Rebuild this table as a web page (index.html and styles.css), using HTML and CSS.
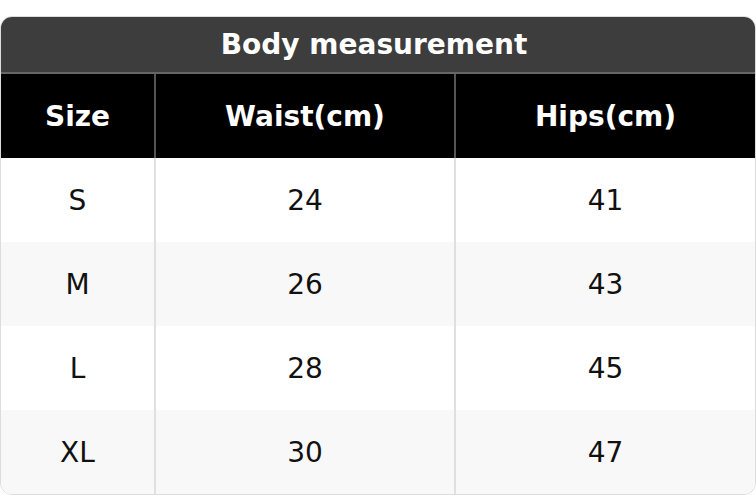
FILE: index.html
```html
<!DOCTYPE html>
<html>
<head>
<meta charset="utf-8">
<link rel="stylesheet" href="styles.css">
</head>
<body>
<div class="card">
  <div class="title">Body measurement</div>
  <table class="grid">
    <colgroup><col class="c1"><col class="c2"><col class="c3"></colgroup>
    <thead>
      <tr><th>Size</th><th>Waist(cm)</th><th>Hips(cm)</th></tr>
    </thead>
    <tbody>
      <tr><td>S</td><td>24</td><td>41</td></tr>
      <tr class="alt"><td>M</td><td>26</td><td>43</td></tr>
      <tr><td>L</td><td>28</td><td>45</td></tr>
      <tr class="alt"><td>XL</td><td>30</td><td>47</td></tr>
    </tbody>
  </table>
</div>
</body>
</html>
```
FILE: styles.css
```css
html, body {
  margin: 0;
  padding: 0;
  background: #ffffff;
}
body {
  font-family: "DejaVu Sans", sans-serif;
  padding-top: 16px;
}
.card {
  width: 756px;
  box-sizing: border-box;
  border: 1px solid #dcdcdc;
  border-radius: 12px;
  overflow: hidden;
  background: #fff;
}
.title {
  height: 55px;
  background: #3d3d3d;
  color: #fff;
  font-weight: bold;
  font-size: 28px;
  display: flex;
  align-items: center;
  justify-content: center;
  border-bottom: 2px solid #666;
  margin: -1px -1px 0 -1px;
  padding-top: 1px;
  padding-right: 8px;
}
.grid {
  width: 100%;
  border-collapse: collapse;
  table-layout: fixed;
}
.c1 { width: 154px; }
.c2 { width: 300px; }
th {
  background: #000;
  color: #fff;
  font-weight: bold;
  font-size: 28px;
  height: 84px;
  padding: 0;
  border-left: 2px solid #555;
}
th:first-child { border-left: none; }
td {
  height: 84px;
  padding: 0;
  text-align: center;
  font-size: 28px;
  color: #111;
  border-left: 2px solid #e0e0e0;
}
td:first-child { border-left: none; }
tr.alt td { background: #f8f8f8; }
```
